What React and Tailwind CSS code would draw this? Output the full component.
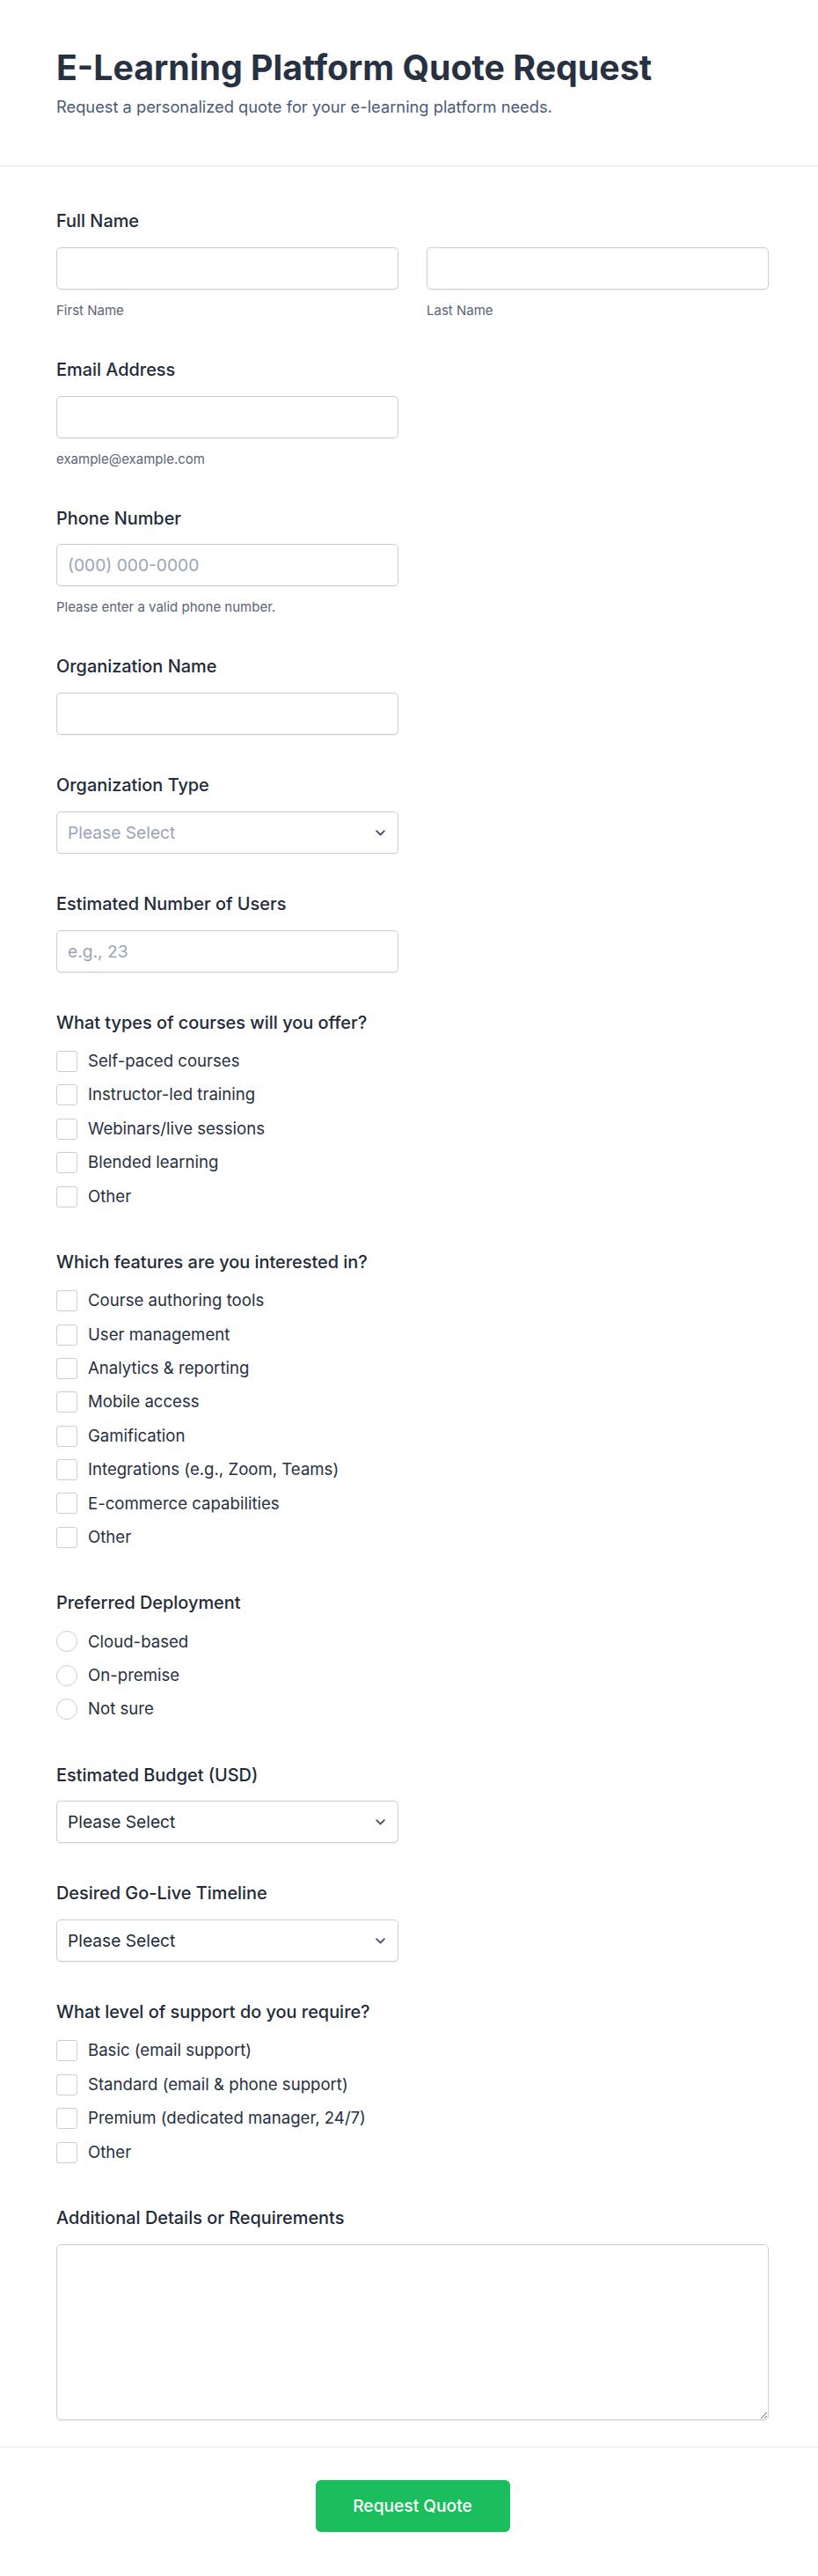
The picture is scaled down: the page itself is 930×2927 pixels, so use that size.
const courseTypes = ['Self-paced courses', 'Instructor-led training', 'Webinars/live sessions', 'Blended learning', 'Other'];

const features = [
  'Course authoring tools',
  'User management',
  'Analytics & reporting',
  'Mobile access',
  'Gamification',
  'Integrations (e.g., Zoom, Teams)',
  'E-commerce capabilities',
  'Other',
];

const deployments = ['Cloud-based', 'On-premise', 'Not sure'];

const supportLevels = [
  'Basic (email support)',
  'Standard (email & phone support)',
  'Premium (dedicated manager, 24/7)',
  'Other',
];

function Label({ children }) {
  return <p className="mb-[15px] text-[19.9px] font-medium leading-[28.8px] text-[#222a38]">{children}</p>;
}

function Hint({ children }) {
  return <p className="mt-[14px] text-[15px] leading-[20px] text-[#5a6478]">{children}</p>;
}

function TextInput({ placeholder, className = '' }) {
  return (
    <input
      type="text"
      placeholder={placeholder}
      className={`h-12 w-full rounded-[5px] border border-[#c9ced8] bg-white px-3 text-[19.2px] text-[#222a38] shadow-[0_1px_1px_rgba(15,23,42,0.06)] outline-none placeholder:text-[#9aa4b6] ${className}`}
    />
  );
}

function SelectBox({ muted }) {
  return (
    <div className="relative w-[389px]">
      <select
        className={`h-12 w-full appearance-none rounded-[5px] border border-[#c9ced8] bg-white pl-3 pr-10 text-[19.2px] shadow-[0_1px_1px_rgba(15,23,42,0.06)] outline-none ${
          muted ? 'text-[#9aa4b6]' : 'text-[#222a38]'
        }`}
        defaultValue=""
      >
        <option value="">Please Select</option>
      </select>
      <svg
        viewBox="0 0 24 24"
        fill="none"
        stroke="#4b5567"
        strokeWidth="3"
        strokeLinecap="round"
        strokeLinejoin="round"
        className="pointer-events-none absolute right-[13px] top-1/2 h-[15px] w-[15px] -translate-y-1/2"
      >
        <path d="m5 9 7 7 7-7" />
      </svg>
    </div>
  );
}

function ChoiceList({ items, type, name }) {
  return (
    <div className="flex flex-col gap-[9.6px]">
      {items.map((item) => (
        <label key={item} className="flex h-[28.8px] items-center gap-3 text-[18.6px] text-[#273041]">
          <input
            type={type}
            name={name}
            className={`h-6 w-6 shrink-0 appearance-none border border-[#c9ced8] bg-white ${
              type === 'radio' ? 'rounded-full' : 'rounded-[3px]'
            }`}
          />
          <span>{item}</span>
        </label>
      ))}
    </div>
  );
}

export default function App() {
  return (
    <div className="min-h-[2927px] bg-white font-['Inter',sans-serif] text-[#222a38]">
      <header className="border-b border-[#e1e5ec] pb-[53px] pl-16 pr-14 pt-[53px]">
        <h1 className="mb-[7px] text-[39.3px] font-bold leading-[48px] text-[#283142]">
          E-Learning Platform Quote Request
        </h1>
        <p className="text-[18.3px] leading-[27px] text-[#4b5a78]">
          Request a personalized quote for your e-learning platform needs.
        </p>
      </header>

      <form className="border-b border-[#e6e9ef] pb-[30px] pl-16 pr-14 pt-12">
        <div className="mb-[43px]">
          <Label>Full Name</Label>
          <div className="grid grid-cols-2 gap-[32px]">
            <div>
              <TextInput />
              <Hint>First Name</Hint>
            </div>
            <div>
              <TextInput />
              <Hint>Last Name</Hint>
            </div>
          </div>
        </div>

        <div className="mb-[43px]">
          <Label>Email Address</Label>
          <TextInput className="!w-[389px]" />
          <Hint>example@example.com</Hint>
        </div>

        <div className="mb-[43px]">
          <Label>Phone Number</Label>
          <TextInput placeholder="(000) 000-0000" className="!w-[389px]" />
          <Hint>Please enter a valid phone number.</Hint>
        </div>

        <div className="mb-[43px]">
          <Label>Organization Name</Label>
          <TextInput className="!w-[389px]" />
        </div>

        <div className="mb-[43px]">
          <Label>Organization Type</Label>
          <SelectBox muted />
        </div>

        <div className="mb-[43px]">
          <Label>Estimated Number of Users</Label>
          <TextInput placeholder="e.g., 23" className="!w-[389px]" />
        </div>

        <div className="mb-[46px]">
          <Label>What types of courses will you offer?</Label>
          <ChoiceList items={courseTypes} type="checkbox" name="courses" />
        </div>

        <div className="mb-[46px]">
          <Label>Which features are you interested in?</Label>
          <ChoiceList items={features} type="checkbox" name="features" />
        </div>

        <div className="mb-[46px]">
          <Label>Preferred Deployment</Label>
          <ChoiceList items={deployments} type="radio" name="deployment" />
        </div>

        <div className="mb-[43px]">
          <Label>Estimated Budget (USD)</Label>
          <SelectBox />
        </div>

        <div className="mb-[43px]">
          <Label>Desired Go-Live Timeline</Label>
          <SelectBox />
        </div>

        <div className="mb-[46px]">
          <Label>What level of support do you require?</Label>
          <ChoiceList items={supportLevels} type="checkbox" name="support" />
        </div>

        <div>
          <Label>Additional Details or Requirements</Label>
          <textarea className="block h-[200px] w-full rounded-[5px] border border-[#c9ced8] bg-white shadow-[0_1px_1px_rgba(15,23,42,0.06)] outline-none" />
        </div>
      </form>

      <div className="flex justify-center pb-[50px] pl-16 pr-14 pt-[37px]">
        <button
          type="button"
          className="h-[59px] w-[221px] rounded-[6px] bg-[#1bbd5d] text-[19.2px] font-medium text-white"
        >
          Request Quote
        </button>
      </div>
    </div>
  );
}
